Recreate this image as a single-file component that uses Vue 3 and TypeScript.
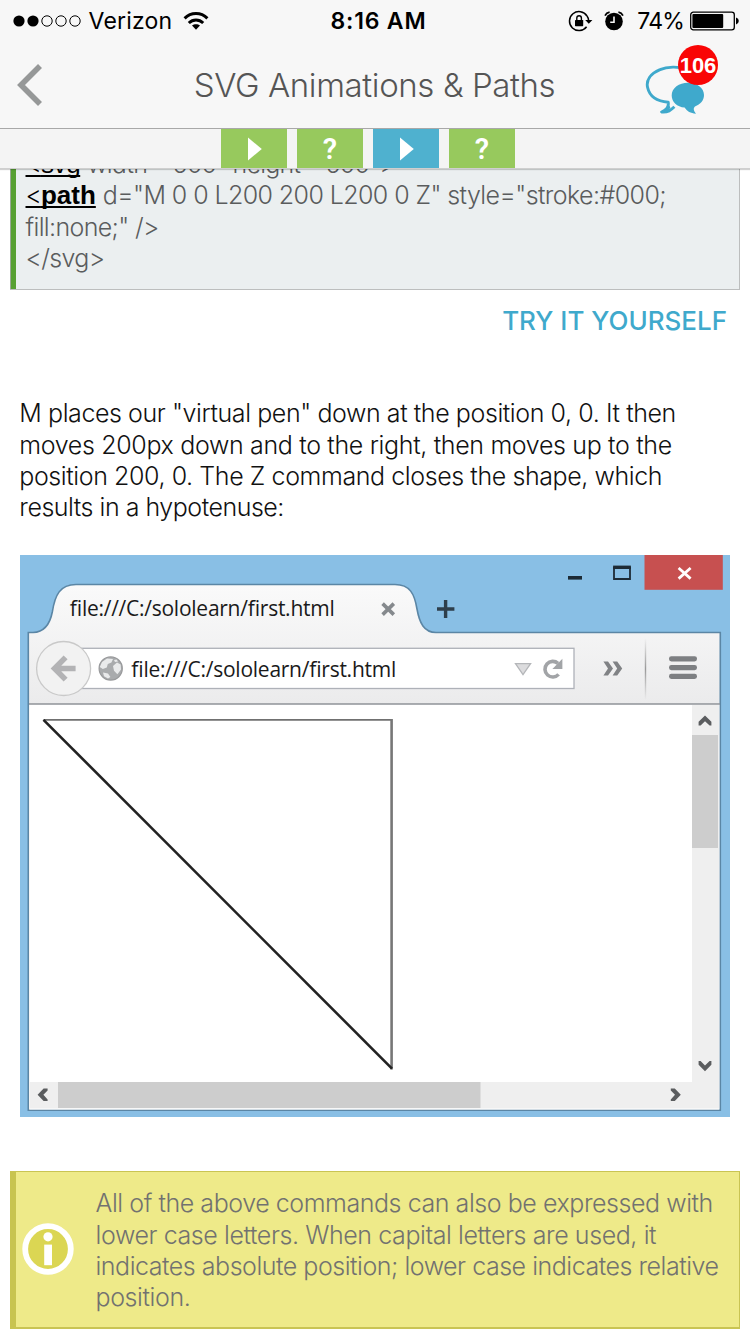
<script setup lang="ts">
interface Line {
  text: string
  spacing: number
}

interface Step {
  kind: 'play' | 'quiz'
  current: boolean
}

const steps: Step[] = [
  { kind: 'play', current: false },
  { kind: 'quiz', current: false },
  { kind: 'play', current: true },
  { kind: 'quiz', current: false },
]

const paragraph: Line[] = [
  { text: 'M places our "virtual pen" down at the position 0, 0. It then', spacing: -0.415 },
  { text: 'moves 200px down and to the right, then moves up to the', spacing: -0.34 },
  { text: 'position 200, 0. The Z command closes the shape, which', spacing: -0.41 },
  { text: 'results in a hypotenuse:', spacing: -0.48 },
]

const note: Line[] = [
  { text: 'All of the above commands can also be expressed with', spacing: -0.44 },
  { text: 'lower case letters. When capital letters are used, it', spacing: -0.41 },
  { text: 'indicates absolute position; lower case indicates relative', spacing: -0.475 },
  { text: 'position.', spacing: -0.4 },
]

const attributes = 'd="M 0 0 L200 200 L200 0 Z" style="stroke:#000;'
</script>

<template>
  <div class="screen">
    <header class="top">
      <div class="status">
        <div class="carrier">
          <svg width="69" height="14" viewBox="0 0 69 14">
            <circle cx="6" cy="7" r="5.6" />
            <circle cx="20" cy="7" r="5.6" />
            <g fill="none" stroke="#000" stroke-width="1">
              <circle cx="34" cy="7" r="5.2" />
              <circle cx="48" cy="7" r="5.2" />
              <circle cx="62" cy="7" r="5.2" />
            </g>
          </svg>
          <span class="verizon">Verizon</span>
          <svg class="wifi" width="26" height="20" viewBox="0 0 26 20">
            <g fill="none" stroke="#000" stroke-width="3">
              <path d="M1.6 7.4 C8 1 18 1 24.4 7.4" />
              <path d="M5.8 12 C10 8 16 8 20.2 12" />
            </g>
            <path d="M9 14.6 C11.2 12.8 14.8 12.8 17 14.6 L13 18.8 Z" />
          </svg>
        </div>
        <div class="clock">8:16 AM</div>
        <div class="indicators">
          <svg width="26" height="24" viewBox="0 0 26 24">
            <path d="M20 7 A9.5 9.5 0 1 0 19.6 17.8" fill="none" stroke="#000" stroke-width="1.5" />
            <path d="M20 7 Q21.4 8.8 21.6 11.4" fill="none" stroke="#000" stroke-width="1.5" />
            <path d="M18.2 11 H25.4 L21.8 14.8 Z" />
            <rect x="8" y="11" width="8.2" height="6.2" rx=".6" />
            <path d="M9.8 11.5 V9 a2.3 2.3 0 0 1 4.6 0 V11.5" fill="none" stroke="#000" stroke-width="1.4" />
          </svg>
          <svg class="alarm" width="22" height="22" viewBox="0 0 22 22">
            <circle cx="11" cy="11.5" r="8.8" />
            <path d="M11 6.5 V12.3 H7.2" fill="none" stroke="#f7f7f7" stroke-width="1.6" />
            <path d="M2 5.6 Q3.4 2.8 6.6 2.2 M20 5.6 Q18.6 2.8 15.4 2.2" fill="none" stroke="#000" stroke-width="1.7" />
          </svg>
          <span class="percent">74%</span>
          <svg class="battery" width="50" height="20" viewBox="0 0 50 20">
            <rect x=".7" y="1.2" width="43.6" height="17.6" rx="2.6" fill="none" stroke="#000" stroke-width="1.3" />
            <rect x="2.4" y="3" width="30.8" height="14" rx="1" />
            <path d="M46 6.6 Q48.8 7.4 48.8 10 Q48.8 12.6 46 13.4 Z" />
          </svg>
        </div>
      </div>
      <nav class="bar">
        <svg class="back" width="28" height="44" viewBox="0 0 28 44">
          <path d="M25 3 L6 22 L25 41" fill="none" stroke="#969898" stroke-width="5.6" />
        </svg>
        <h1>SVG Animations &amp; Paths</h1>
        <div class="chat">
          <svg width="60" height="50" viewBox="645 63 60 50">
            <path
              d="M686 68.3 C679 65.2 667 65.4 660 68.6 C650 72.8 646 79.5 647.6 86.5 C649.6 95.5 657.5 100.4 668.2 101.2 C669 105.5 667 108.6 661.6 111 C668 111.6 671 109 674.4 105.8"
              fill="none" stroke="#3fa9cc" stroke-width="2.9" stroke-linejoin="round"
            />
            <path d="M662 111.8 C668 108.5 667 106.5 668.4 103 L670.4 106.5 C669 110 666 112 662 111.8 Z" fill="#3fa9cc" />
            <path
              d="M688 81.8 C697 81.8 704 87 704 94 C704 99.5 700.5 103.4 695 105.4 C693 107.5 693.5 109 696 112.8 C690.5 112.4 687 110.5 684.6 106.6 C677 105.8 671.7 100.8 671.7 94.4 C671.7 87.2 679 81.8 688 81.8 Z"
              fill="#3fa9cc"
            />
          </svg>
          <span class="badge">106</span>
        </div>
      </nav>
      <div class="steps">
        <div v-for="(step, i) in steps" :key="i" class="step" :class="{ current: step.current }">
          <svg v-if="step.kind === 'play'" width="18" height="28" viewBox="0 0 18 28">
            <path d="M3 2.5 L16.8 14 L3 25.5 Z" fill="#fff" />
          </svg>
          <span v-else>?</span>
        </div>
      </div>
    </header>

    <main>
      <div class="code">
        <div class="row">
          <span class="tag">&lt;<span class="name">svg</span></span> <span class="dim">width="500" height="500"&gt;</span>
        </div>
        <div class="row">
          <span class="tag">&lt;<b>path</b></span> <span class="attrs">{{ attributes }}</span>
        </div>
        <div class="row tight">fill:none;" /&gt;</div>
        <div class="row tight">&lt;/svg&gt;</div>
      </div>
      <div class="try">TRY IT YOURSELF</div>
      <p class="text">
        <span v-for="l in paragraph" :key="l.text" :style="{ letterSpacing: l.spacing + 'px' }">{{ l.text }}</span>
      </p>

      <svg class="browser" width="710" height="562" viewBox="20 555 710 562">
        <defs>
          <linearGradient id="chrome" x1="0" y1="584" x2="0" y2="704" gradientUnits="userSpaceOnUse">
            <stop offset="0" stop-color="#fafafa" />
            <stop offset="1" stop-color="#ebebec" />
          </linearGradient>
          <linearGradient id="divider" x1="0" y1="638" x2="0" y2="700" gradientUnits="userSpaceOnUse">
            <stop offset="0" stop-color="#999" stop-opacity="0" />
            <stop offset=".5" stop-color="#999" />
            <stop offset="1" stop-color="#999" stop-opacity="0" />
          </linearGradient>
        </defs>
        <rect x="20" y="555" width="710" height="562" fill="#89bfe5" />
        <path
          d="M28.3 1110.3 V632.5 H33 C45 632 50 624 52.3 612 C55 595 60 584.5 76 584.5 H395 C410 584.5 414.5 594 417 609 C419.5 623 424 632.5 436 632.5 H720.3 V1110.3 Z"
          fill="url(#chrome)" stroke="#5b86a5" stroke-width="1.6"
        />
        <rect x="29.3" y="704" width="690" height="405.5" fill="#fff" />
        <path d="M29 704 H720" stroke="#8f9398" stroke-width="1.6" />

        <rect x="568" y="576" width="14" height="3.6" fill="#1d2b36" />
        <path d="M614 568 H630 V579 H614 Z" fill="none" stroke="#1d2b36" stroke-width="1.8" />
        <rect x="613.1" y="565.6" width="17.8" height="3.4" fill="#1d2b36" />
        <rect x="644.5" y="555" width="78.3" height="34.8" fill="#c75050" />
        <path d="M678.6 568 L690.6 578.6 M690.6 568 L678.6 578.6" stroke="#fff" stroke-width="2.8" />

        <text x="69.5" y="616" class="url" textLength="265">file:///C:/sololearn/first.html</text>
        <path d="M382.6 603.6 L393.8 614.6 M393.8 603.6 L382.6 614.6" stroke="#85898d" stroke-width="3.6" />
        <path d="M445.6 600 V618 M437 609 H454.4" stroke="#2e3f4c" stroke-width="3.4" />

        <rect x="70" y="648.3" width="504" height="40.2" fill="#fff" stroke="#aeb1b8" stroke-width="1.3" />
        <circle cx="63.6" cy="668.5" r="27" fill="#f2f2f2" stroke="#c9c9c9" stroke-width="1.3" />
        <path d="M75.6 668.5 H56 M65.6 657.4 L54.6 668.5 L65.6 679.6" fill="none" stroke="#b3b3b5" stroke-width="5.6" />
        <circle cx="110.7" cy="668.5" r="11.6" fill="#a9abad" stroke="#98999b" stroke-width="1.2" />
        <path
          d="M102 662 l5 -3.6 6 .6 -1.6 3.6 -3.6 1.4 -1 3.4 -4 1.6 -3 -2 Z M113 666 l4 -3.4 3.6 2 .4 5 -3.6 4.6 -3.4 -3.4 Z M103 672.6 l5 .8 2.4 3.6 -2.4 1.6 -4 -2.4 Z M114 660 l2.6 -.6 1.4 2 -3 .6 Z"
          fill="#e9eaeb"
        />
        <text x="131" y="677" class="url" textLength="265">file:///C:/sololearn/first.html</text>
        <path d="M515.5 663.6 H530.6 L523 674.6 Z" fill="#dcdcde" stroke="#b4b6b9" stroke-width="1.3" />
        <path d="M558.6 674.4 A7.8 7.8 0 1 1 558 663.4" fill="none" stroke="#a2a4a7" stroke-width="3.6" />
        <path d="M562.4 658.8 V669 H552.4 Z" fill="#a2a4a7" />
        <path
          d="M603.4 661.4 H608 L613 668.4 L608 675.6 H603.4 L608 668.4 Z M612.6 661.4 H617.2 L622.2 668.4 L617.2 675.6 H612.6 L617.2 668.4 Z"
          fill="#808285"
        />
        <rect x="644.8" y="638" width="1.4" height="62" fill="url(#divider)" />
        <g fill="#7d7f82">
          <rect x="669" y="656.2" width="28" height="5.2" rx="2.4" />
          <rect x="669" y="665" width="28" height="5.2" rx="2.4" />
          <rect x="669" y="673.8" width="28" height="5.2" rx="2.4" />
        </g>

        <path d="M692 705 H719 V1108.6 H29.6 V1082 H692 Z" fill="#efefef" />
        <rect x="692" y="735" width="26" height="113" fill="#cdcdcd" />
        <rect x="58" y="1082" width="422.5" height="26" fill="#cdcdcd" />
        <g fill="#5b5d5f">
          <path d="M698.6 725.6 V721.8 L705 715.4 L711.4 721.8 V725.6 H709.6 L705 721.2 L700.6 725.6 Z" />
          <path d="M698.6 1061 V1064.8 L705 1071.2 L711.4 1064.8 V1061 H709.6 L705 1065.4 L700.6 1061 Z" />
          <path d="M47.6 1088.6 H43.6 L37.6 1094.8 L43.6 1101 H47.6 V1099.4 L43.4 1094.8 L47.6 1090.4 Z" />
          <path d="M670.8 1088.6 H674.8 L680.8 1094.8 L674.8 1101 H670.8 V1099.4 L675 1094.8 L670.8 1090.4 Z" />
        </g>

        <path d="M43.5 719.8 H392" stroke="#707070" stroke-width="1.8" />
        <path d="M391.6 719 V1069.5" stroke="#777" stroke-width="2.6" />
        <path d="M43.5 719.8 L392 1068.6" stroke="#222" stroke-width="2.6" />
      </svg>

      <div class="note">
        <svg class="info" width="52" height="52" viewBox="0 0 52 52">
          <circle cx="26" cy="26" r="22.8" fill="#dbd653" stroke="#fff" stroke-width="5.8" />
          <circle cx="26" cy="13.8" r="4.6" fill="#fff" />
          <rect x="22.2" y="21.6" width="7.8" height="20.6" fill="#fff" />
        </svg>
        <p>
          <span v-for="l in note" :key="l.text" :style="{ letterSpacing: l.spacing + 'px' }">{{ l.text }}</span>
        </p>
      </div>
    </main>
  </div>
</template>

<style>
body {
  background: #fff;
}
</style>

<style scoped>
.screen {
  width: 750px;
  height: 1334px;
  overflow: hidden;
  display: flex;
  flex-direction: column;
  font-family: Inter, "Liberation Sans", sans-serif;
  font-weight: 300;
  color: #111;
}
.screen svg {
  display: block;
  flex: none;
}
.top {
  position: relative;
  z-index: 1;
  height: 168px;
  flex: none;
  background: #f4f4f4;
  border-bottom: 1px solid #cfcfcf;
  box-shadow: 0 1px 1px rgba(0, 0, 0, 0.18);
}
.status {
  height: 41px;
  display: grid;
  grid-template-columns: 1fr auto 1fr;
  align-items: center;
  background: #f7f7f7;
  color: #000;
  font-size: 23px;
  font-weight: 400;
}
.carrier {
  display: flex;
  align-items: center;
  padding-left: 12.5px;
}
.verizon {
  margin-left: 7px;
  letter-spacing: 0.2px;
}
.verizon,
.clock,
.percent {
  padding-top: 1px;
}
.wifi {
  margin-left: 11px;
}
.clock {
  font-weight: 600;
  letter-spacing: 0.8px;
  padding-left: 7px;
}
.indicators {
  display: flex;
  align-items: center;
  justify-content: flex-end;
  padding-right: 10px;
}
.alarm {
  margin-left: 10px;
}
.percent {
  margin-left: 12px;
  letter-spacing: -0.8px;
}
.battery {
  margin-left: 6px;
}
.bar {
  height: 87px;
  display: flex;
  align-items: center;
  justify-content: space-between;
  background: #f7f7f7;
  padding: 0 32px 0 15px;
  border-bottom: 1px solid #a8a8a8;
}
h1 {
  margin: 0 0 0 61px;
  font-size: 33px;
  line-height: 40px;
  font-weight: 300;
  letter-spacing: -0.38px;
  color: #555;
}
.chat {
  position: relative;
  padding: 9px 13px 0 0;
}
.badge {
  position: absolute;
  top: -10px;
  right: 0;
  width: 40px;
  height: 40px;
  border-radius: 50%;
  background: #f90505;
  color: #fff;
  font: bold 22px/41px "Liberation Sans", sans-serif;
  text-align: center;
}
.steps {
  height: 39px;
  display: flex;
  justify-content: center;
  gap: 10px;
  padding-right: 14px;
}
.step {
  width: 66px;
  display: flex;
  align-items: center;
  justify-content: center;
  background: #97c95d;
  color: #fff;
  font: 600 29px/38px Roboto, sans-serif;
}
.current {
  background: #4fb1cf;
}
main {
  flex: 1;
  min-height: 0;
  overflow: hidden;
}
.code {
  position: relative;
  margin: -20px 10px 0;
  height: 141px;
  box-sizing: border-box;
  border: 1px solid #bcbebe;
  border-left: 0;
  box-shadow: inset 1px 0 #9aa895, inset 6px 0 #57a032;
  background: #ebeff0;
  padding-left: 15.5px;
  font-size: 25px;
  color: #5a5c5d;
}
.row {
  height: 31.3px;
  line-height: 31.3px;
  white-space: pre;
  position: relative;
  top: -1px;
}
.tag {
  color: #000;
  text-decoration: underline;
  text-decoration-thickness: 2px;
  text-underline-offset: 2px;
  text-decoration-skip-ink: none;
  letter-spacing: -0.9px;
}
.tag b {
  font: bold 26px/31px "Liberation Sans", sans-serif;
  letter-spacing: 0;
}
.name {
  font: 26px/31px "Liberation Sans", sans-serif;
  letter-spacing: -0.4px;
}
.dim {
  letter-spacing: -0.8px;
}
.attrs {
  letter-spacing: -0.59px;
}
.tight {
  letter-spacing: -0.65px;
}
.try {
  margin: 15px 23px 0 0;
  text-align: right;
  font-size: 26px;
  line-height: 31px;
  font-weight: 500;
  color: #3fa9cc;
}
p {
  margin: 0;
  font-size: 25px;
  line-height: 31.3px;
}
p span {
  display: block;
  white-space: nowrap;
}
.text {
  margin: 62.3px 0 0 19.3px;
}
.browser {
  margin: 31.5px 0 0 20px;
}
.url {
  font-family: "Open Sans", sans-serif;
  font-size: 21px;
  font-weight: 400;
  fill: #1a1a1a;
}
.note {
  margin: 54px 10px 0;
  height: 158px;
  box-sizing: border-box;
  display: flex;
  align-items: center;
  border: 1px solid #c9c453;
  border-left: 6px solid #c8c450;
  border-bottom-width: 2px;
  background: #eeea89;
  color: #727270;
}
.info {
  margin-left: 6px;
}
.note p {
  margin-left: 21.5px;
  padding-top: 3px;
}
</style>
